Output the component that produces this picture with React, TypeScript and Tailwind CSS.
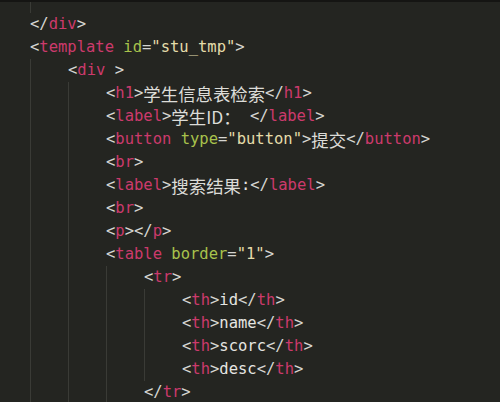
import React from "react";

type Kind = "p" | "t" | "a" | "s" | "x" | "c";
type Tok = [Kind, string];

const cls: Record<Kind, string> = {
  p: "text-[#d6d6d2]",
  t: "text-[#cc3a6c]",
  a: "text-[#a8c24c]",
  s: "text-[#e4dcaa]",
  x: "text-[#e6e6e2]",
  c: "text-[#dcdcd8] text-[17.4px] [font-family:'Noto_Sans_CJK_SC','Noto_Sans',sans-serif]",
};

const lines: { lvl: number; toks: Tok[] }[] = [
  { lvl: 0, toks: [["p", "</"], ["t", "div"], ["p", ">"]] },
  {
    lvl: 0,
    toks: [["p", "<"], ["t", "template"], ["x", " "], ["a", "id"], ["p", "="], ["s", '"stu_tmp"'], ["p", ">"]],
  },
  { lvl: 1, toks: [["p", "<"], ["t", "div"], ["p", " >"]] },
  {
    lvl: 2,
    toks: [["p", "<"], ["t", "h1"], ["p", ">"], ["c", "学生信息表检索"], ["p", "</"], ["t", "h1"], ["p", ">"]],
  },
  {
    lvl: 2,
    toks: [["p", "<"], ["t", "label"], ["p", ">"], ["c", "学生ID："], ["p", " </"], ["t", "label"], ["p", ">"]],
  },
  {
    lvl: 2,
    toks: [
      ["p", "<"], ["t", "button"], ["x", " "], ["a", "type"], ["p", "="], ["s", '"button"'], ["p", ">"],
      ["c", "提交"], ["p", "</"], ["t", "button"], ["p", ">"],
    ],
  },
  { lvl: 2, toks: [["p", "<"], ["t", "br"], ["p", ">"]] },
  {
    lvl: 2,
    toks: [["p", "<"], ["t", "label"], ["p", ">"], ["c", "搜索结果"], ["x", ":"], ["p", "</"], ["t", "label"], ["p", ">"]],
  },
  { lvl: 2, toks: [["p", "<"], ["t", "br"], ["p", ">"]] },
  { lvl: 2, toks: [["p", "<"], ["t", "p"], ["p", "></"], ["t", "p"], ["p", ">"]] },
  {
    lvl: 2,
    toks: [["p", "<"], ["t", "table"], ["x", " "], ["a", "border"], ["p", "="], ["s", '"1"'], ["p", ">"]],
  },
  { lvl: 3, toks: [["p", "<"], ["t", "tr"], ["p", ">"]] },
  ...["id", "name", "scorc", "desc"].map((w) => ({
    lvl: 4,
    toks: [["p", "<"], ["t", "th"], ["p", ">"], ["x", w], ["p", "</"], ["t", "th"], ["p", ">"]] as Tok[],
  })),
  { lvl: 3, toks: [["p", "</"], ["t", "tr"], ["p", ">"]] },
];

function Guides({ n }: { n: number }) {
  return (
    <>
      {Array.from({ length: n }).map((_, i) => (
        <span key={i} className="h-full w-[38px] shrink-0 border-l border-[#3a3b36]" />
      ))}
    </>
  );
}

export default function App() {
  return (
    <div className="w-[500px] h-[402px] overflow-hidden bg-[#242521] border-t-2 border-[#151513] [font-family:'DejaVu_Sans_Mono',monospace] text-[15.5px]">
      <div className="flex h-[11px] pl-[30px]">
        <Guides n={1} />
      </div>
      {lines.map((l, i) => (
        <div key={i} className="flex h-[23px] items-center whitespace-pre pl-[30px] leading-[23px]">
          <Guides n={l.lvl} />
          <span className="flex items-center">
            {l.toks.map(([k, t], j) => (
              <span key={j} className={cls[k]}>
                {t}
              </span>
            ))}
          </span>
        </div>
      ))}
    </div>
  );
}
